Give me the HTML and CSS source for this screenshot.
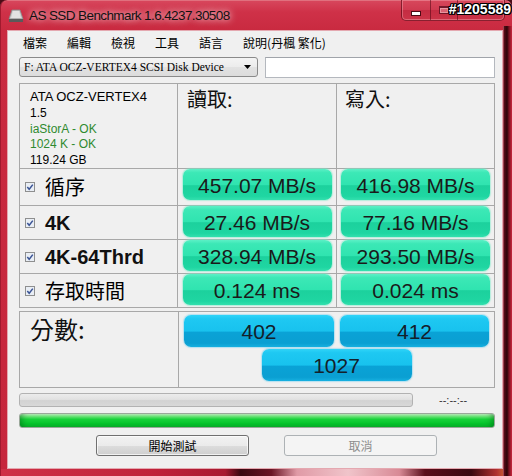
FILE: index.html
```html
<!DOCTYPE html>
<html>
<head>
<meta charset="utf-8">
<link rel="stylesheet" href="styles.css">
</head>
<body>
<div class="window">
  <div class="titlebar">
    <svg class="app-icon" width="16" height="14" viewBox="0 0 16 14">
      <polygon points="4,1 12,1 15,10 1,10" fill="#c9c9c9" stroke="#8a8a8a" stroke-width="0.8"/>
      <polygon points="5,2 11,2 13,9 3,9" fill="#e2e2e2"/>
      <rect x="1" y="10" width="14" height="3" fill="#5a5a5a"/>
    </svg>
    <span class="title">AS SSD Benchmark 1.6.4237.30508</span>
    <div class="caption">
      <div class="cbtn cmin"><span class="g-min"></span></div>
      <div class="cbtn cmax"><span class="g-max"></span></div>
      <div class="cbtn cclose">
        <svg width="12" height="10" viewBox="0 0 12 10"><path d="M2 1 L10 9 M10 1 L2 9" stroke="#3a0a12" stroke-width="3.2"/><path d="M2 1 L10 9 M10 1 L2 9" stroke="#ffffff" stroke-width="1.8"/></svg>
      </div>
    </div>
    <span class="watermark">#1205589</span>
  </div>

  <div class="client">
    <div class="menubar">
      <span class="mitem">檔案</span>
      <span class="mitem">編輯</span>
      <span class="mitem">檢視</span>
      <span class="mitem">工具</span>
      <span class="mitem">語言</span>
      <span class="mitem">說明(丹楓 繁化)</span>
    </div>

    <div class="toolbar">
      <div class="combo">
        <span class="combo-text">F: ATA OCZ-VERTEX4 SCSI Disk Device</span>
        <svg class="combo-arrow" width="7" height="4" viewBox="0 0 7 4"><polygon points="0,0 7,0 3.5,4" fill="#000"/></svg>
      </div>
      <div class="textbox"></div>
    </div>

    <div class="results">
      <div class="cell info">
        <div class="dev">ATA OCZ-VERTEX4</div>
        <div class="small">1.5</div>
        <div class="small ok">iaStorA - OK</div>
        <div class="small ok">1024 K - OK</div>
        <div class="small">119.24 GB</div>
      </div>
      <div class="cell head">讀取:</div>
      <div class="cell head head-w">寫入:</div>

      <div class="cell label"><svg class="chk" width="10" height="10" viewBox="0 0 10 10"><rect x="0.5" y="0.5" width="9" height="9" fill="#e9eef5" stroke="#8e8f8f"/><path d="M2.3 5 L4.2 7.2 L7.8 2.6" stroke="#3b5495" stroke-width="1.5" fill="none"/></svg><span class="cjk">循序</span></div>
      <div class="cell val"><div class="gbar">457.07 MB/s</div></div>
      <div class="cell val"><div class="gbar">416.98 MB/s</div></div>

      <div class="cell label"><svg class="chk" width="10" height="10" viewBox="0 0 10 10"><rect x="0.5" y="0.5" width="9" height="9" fill="#e9eef5" stroke="#8e8f8f"/><path d="M2.3 5 L4.2 7.2 L7.8 2.6" stroke="#3b5495" stroke-width="1.5" fill="none"/></svg><span class="lat">4K</span></div>
      <div class="cell val"><div class="gbar">27.46 MB/s</div></div>
      <div class="cell val"><div class="gbar">77.16 MB/s</div></div>

      <div class="cell label"><svg class="chk" width="10" height="10" viewBox="0 0 10 10"><rect x="0.5" y="0.5" width="9" height="9" fill="#e9eef5" stroke="#8e8f8f"/><path d="M2.3 5 L4.2 7.2 L7.8 2.6" stroke="#3b5495" stroke-width="1.5" fill="none"/></svg><span class="lat">4K-64Thrd</span></div>
      <div class="cell val"><div class="gbar">328.94 MB/s</div></div>
      <div class="cell val"><div class="gbar">293.50 MB/s</div></div>

      <div class="cell label"><svg class="chk" width="10" height="10" viewBox="0 0 10 10"><rect x="0.5" y="0.5" width="9" height="9" fill="#e9eef5" stroke="#8e8f8f"/><path d="M2.3 5 L4.2 7.2 L7.8 2.6" stroke="#3b5495" stroke-width="1.5" fill="none"/></svg><span class="cjk">存取時間</span></div>
      <div class="cell val"><div class="gbar">0.124 ms</div></div>
      <div class="cell val"><div class="gbar">0.024 ms</div></div>
    </div>

    <div class="score">
      <div class="score-label">分數:</div>
      <div class="score-vals">
        <div class="bbar">402</div>
        <div class="bbar">412</div>
        <div class="bbar total">1027</div>
      </div>
    </div>

    <div class="progress-row">
      <div class="pbar"></div>
      <span class="time">--:--:--</span>
    </div>
    <div class="green"></div>

    <div class="buttons">
      <div class="btn">開始測試</div>
      <div class="btn disabled">取消</div>
    </div>
  </div>
</div>
</body>
</html>
```

FILE: styles.css
```css
html, body {
  margin: 0;
  padding: 0;
}
body {
  width: 512px;
  height: 476px;
  overflow: hidden;
  background: #4a0c16;
  font-family: "Liberation Sans", Arial, sans-serif;
}

.window {
  width: 512px;
  height: 476px;
  box-sizing: border-box;
  padding: 0 9px 7px 7px;
  display: flex;
  flex-direction: column;
  border-radius: 7px 7px 0 0;
  background:
    linear-gradient(90deg, #e07886 0px, #5a0c18 1px, #2c0408 4px, #7a1020 6px, #c8283e 9px) right 0 top 26px / 9px calc(100% - 26px) no-repeat,
    linear-gradient(90deg, #cf3146 0%, #c0223a 30%, #a81a30 44%, #3a0810 47%, #6a1424 53%, #e09aa6 58%, #f0c4ca 68%, #d88a96 78%, #5a0e1a 83%, #3a0810 92%, #b03030 97%, #e08a3a 100%) left bottom / 100% 7px no-repeat,
    linear-gradient(180deg, #d8485e 0px, #cf3148 12px, #c92a40 30px, #c6263c 100%);
  box-shadow: inset 1px 0 0 #a01a2e, inset 0 1px 0 #e0707e;
}

/* ---------- title bar ---------- */
.titlebar {
  height: 30px;
  flex: none;
  display: flex;
  align-items: flex-start;
  margin: 0 -9px 0 -7px;
  position: relative;
}
.app-icon {
  margin: 9px 0 0 8px;
  flex: none;
}
.title {
  margin: 7px 0 0 5px;
  font-size: 13.5px;
  line-height: 18px;
  letter-spacing: -0.6px;
  color: #111;
  text-shadow: 0 0 6px rgba(255, 235, 238, 0.9), 0 0 10px rgba(255, 220, 225, 0.6);
}
.caption {
  margin-left: auto;
  margin-right: 7px;
  display: flex;
  height: 20px;
  border: 1px solid rgba(70, 0, 12, 0.55);
  border-top: none;
  border-radius: 0 0 5px 5px;
  overflow: hidden;
  box-shadow: inset 0 0 0 1px rgba(255, 200, 205, 0.35);
  background: linear-gradient(180deg, #d8485c 0%, #cf3a50 50%, #c42c42 51%, #cc3448 100%);
}
.cbtn {
  height: 20px;
  display: flex;
  align-items: center;
  justify-content: center;
}
.cmin { width: 28px; }
.cmax { width: 26px; border-left: 1px solid rgba(70, 0, 12, 0.5); }
.cclose { width: 46px; border-left: 1px solid rgba(70, 0, 12, 0.5); }
.g-min {
  display: block;
  width: 8px;
  height: 3px;
  margin-top: 6px;
  background: #fff;
  border: 1px solid #4a0a14;
}
.g-max {
  display: block;
  width: 8px;
  height: 5px;
  border: 1px solid #5a1020;
  border-top-width: 2px;
  background: #e07080;
  box-shadow: inset 0 0 0 1px #f0b0b8;
  opacity: 0.8;
}
.watermark {
  position: absolute;
  right: 1px;
  top: 1px;
  font-weight: bold;
  font-size: 14px;
  line-height: 16px;
  color: #fff;
  text-shadow: 1px 0 0 #000, -1px 0 0 #000, 0 1px 0 #000, 0 -1px 0 #000,
    1px 1px 0 #000, -1px -1px 0 #000, 1px -1px 0 #000, -1px 1px 0 #000;
}

/* ---------- client ---------- */
.client {
  flex: 1;
  background: #f0f0f0;
  border: 1px solid #e4a8b0;
  display: flex;
  flex-direction: column;
}
.cjk, .menubar, .head, .score-label, .btn {
  font-family: "Noto Sans CJK TC", "Noto Sans CJK SC", sans-serif;
}

.menubar {
  height: 20px;
  padding: 2px 0 0 5px;
  display: flex;
  font-size: 12px;
  line-height: 20px;
  color: #000;
}
.mitem {
  padding: 0 10px;
}

.toolbar {
  margin: 4px 0 0 11px;
  height: 21px;
  display: flex;
  align-items: flex-start;
}
.combo {
  width: 239px;
  height: 20px;
  box-sizing: border-box;
  border: 1px solid #8a8a8a;
  border-radius: 3px;
  background: linear-gradient(180deg, #f4f4f4 0%, #ececec 50%, #e2e2e2 51%, #dcdcdc 100%);
  display: flex;
  align-items: center;
  padding: 0 4px 0 4px;
}
.combo-text {
  font-family: "Liberation Serif", "Times New Roman", serif;
  font-size: 11.5px;
  color: #000;
  flex: 1;
  white-space: nowrap;
}
.combo-arrow {
  margin-right: 2px;
}
.textbox {
  margin-left: 7px;
  width: 230px;
  height: 21px;
  box-sizing: border-box;
  border: 1px solid #b4b8be;
  border-top-color: #a0a4aa;
  background: #fff;
}

/* ---------- results grid ---------- */
.results {
  margin: 5px 0 0 11px;
  display: grid;
  grid-template-columns: 157px 158px 157px;
  grid-template-rows: 84px 36px 33px 33px 33px;
  gap: 1px;
  background: #a8a8a8;
  border: 1px solid #a8a8a8;
  width: max-content;
}
.cell {
  background: #f0f0f0;
}
.info {
  padding: 4px 0 0 10px;
  color: #000;
}
.dev {
  font-size: 13px;
  line-height: 18px;
}
.small {
  font-size: 12px;
  line-height: 15.5px;
}
.ok {
  color: #2f8a2f;
}
.head {
  font-size: 20px;
  line-height: 24px;
  padding: 3px 0 0 9px;
  color: #111;
}
.head-w {
  padding-left: 8px;
}
.label {
  display: flex;
  align-items: center;
  padding-left: 5px;
  color: #000;
}
.chk {
  flex: none;
  margin-right: 10px;
}
.label .cjk {
  font-size: 20px;
  line-height: 24px;
}
.label .lat {
  font-size: 20px;
  font-weight: bold;
  line-height: 24px;
  color: #111;
}
.val {
  display: flex;
  justify-content: center;
  align-items: flex-start;
}
.gbar {
  width: 149px;
  height: 31px;
  box-sizing: border-box;
  padding-top: 2px;
  border-radius: 7px;
  background: linear-gradient(180deg, #5cf0c6 0%, #3ce8b6 12%, #30e4b0 50%, #1cd19d 54%, #1fd6a2 88%, #33e0ae 100%);
  box-shadow: 0 0 1px 1px rgba(120, 235, 200, 0.5);
  text-align: center;
  font-size: 21px;
  line-height: 29px;
  color: #1a1a1a;
  white-space: nowrap;
}

/* ---------- score ---------- */
.score {
  margin: 3px 0 0 11px;
  width: 476px;
  height: 77px;
  box-sizing: border-box;
  border: 1px solid #a8a8a8;
  display: grid;
  grid-template-columns: 159px 1fr;
}
.score-label {
  border-right: 1px solid #a8a8a8;
  font-size: 24px;
  line-height: 30px;
  padding: 2px 0 0 10px;
  color: #111;
}
.score-vals {
  padding: 3px 0 0 5px;
  display: grid;
  grid-template-columns: 150px 149px;
  grid-template-rows: 32px 32px;
  column-gap: 6px;
  row-gap: 2px;
  align-content: start;
}
.bbar {
  height: 32px;
  box-sizing: border-box;
  padding-top: 2px;
  border-radius: 7px;
  background: linear-gradient(180deg, #30d4f8 0%, #1ec8f2 12%, #18c2ee 50%, #0aa2d6 54%, #0a9fd2 88%, #16b0e0 100%);
  box-shadow: 0 0 1px 1px rgba(120, 210, 240, 0.5);
  text-align: center;
  font-size: 21px;
  line-height: 29px;
  color: #14202a;
}
.total {
  grid-column: 1 / 3;
  justify-self: center;
  width: 150px;
}

/* ---------- progress ---------- */
.progress-row {
  margin: 5px 0 0 11px;
  height: 14px;
  display: flex;
  align-items: center;
}
.pbar {
  width: 394px;
  height: 14px;
  box-sizing: border-box;
  border: 1px solid #b2b2b2;
  border-radius: 3px;
  background: linear-gradient(180deg, #ececec 0%, #e2e2e2 45%, #d2d2d2 55%, #d8d8d8 100%);
}
.time {
  margin-left: 26px;
  font-size: 11px;
  color: #333;
}
.green {
  margin: 6px 0 0 11px;
  width: 476px;
  height: 15px;
  box-sizing: border-box;
  border: 1px solid #9aa89a;
  border-radius: 3px;
  background: linear-gradient(180deg, #c6f6c8 0%, #6ee67a 18%, #18d23a 40%, #06c42c 75%, #0ab42c 100%);
  box-shadow: inset 6px 0 6px -4px rgba(0, 90, 20, 0.5), inset -6px 0 6px -4px rgba(0, 90, 20, 0.5);
}

/* ---------- buttons ---------- */
.buttons {
  margin: 7px 0 0 88px;
  display: flex;
  gap: 35px;
}
.btn {
  width: 153px;
  height: 21px;
  box-sizing: border-box;
  border: 1px solid #707070;
  border-radius: 3px;
  background: linear-gradient(180deg, #f2f2f2 0%, #ebebeb 50%, #dddddd 51%, #cfcfcf 100%);
  box-shadow: inset 0 0 0 1px rgba(255, 255, 255, 0.7);
  text-align: center;
  font-size: 12px;
  line-height: 19px;
  color: #000;
}
.btn.disabled {
  border-color: #adb2b5;
  background: #f4f4f4;
  box-shadow: none;
  color: #8d8d8d;
}
```
